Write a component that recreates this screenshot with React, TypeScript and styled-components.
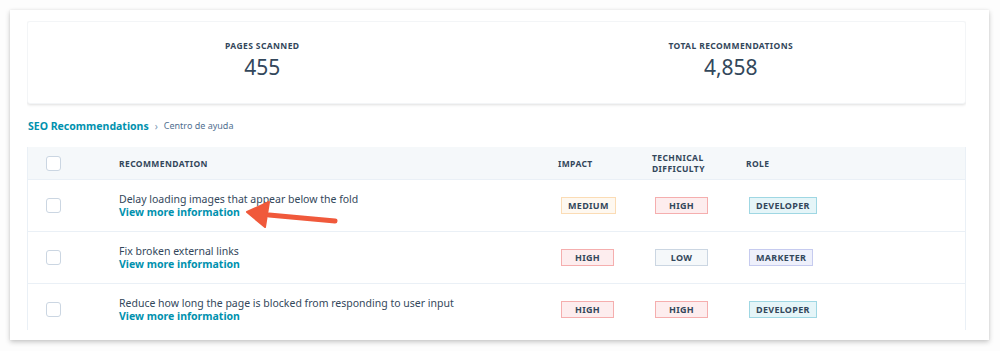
import React from 'react';
import styled, { createGlobalStyle } from 'styled-components';

const GlobalStyle = createGlobalStyle`
  html, body {
    margin: 0;
    padding: 0;
    background: #ffffff;
    font-family: "Noto Sans", "Open Sans", sans-serif;
    color: #33475b;
  }
`;

const Page = styled.div`
  width: 1000px;
  height: 351px;
  padding: 10px 11px 0 10px;
  box-sizing: border-box;
  background: #fdfdfd;
`;

const Panel = styled.div`
  height: 330px;
  background: #ffffff;
  box-shadow: 0 2px 5px rgba(0, 0, 0, 0.22), 0 0 2px rgba(0, 0, 0, 0.06);
  padding: 11px 23px 10px 17px;
  box-sizing: border-box;
`;

const Scroller = styled.div`
  height: 309px;
  overflow: hidden;
  position: relative;
`;

const StatsCard = styled.div`
  height: 83px;
  display: grid;
  grid-template-columns: 1fr 1fr;
  background: #ffffff;
  border-radius: 3px;
  box-shadow: 0 1px 3px rgba(0, 0, 0, 0.13);
  border: 1px solid #f3f5f7;
  box-sizing: border-box;
`;

const Stat = styled.div`
  display: flex;
  flex-direction: column;
  align-items: center;
  padding-top: 18px;
`;

const StatLabel = styled.div`
  font-size: 8.5px;
  font-weight: 700;
  letter-spacing: 0.4px;
  color: #33475b;
  line-height: 12px;
`;

const StatValue = styled.div`
  font-size: 21px;
  font-weight: 400;
  color: #33475b;
  line-height: 26px;
  margin-top: 2px;
`;

const Breadcrumb = styled.div`
  display: flex;
  align-items: center;
  height: 43px;
  gap: 6px;
  padding-left: 1px;
`;

const CrumbLink = styled.span`
  font-size: 10.5px;
  font-weight: 700;
  color: #0091ae;
`;

const CrumbSep = styled.span`
  font-size: 10px;
  color: #7c98b6;
`;

const CrumbCurrent = styled.span`
  font-size: 9px;
  color: #516f90;
`;

const Table = styled.div`
  border-left: 1px solid #eaf0f6;
  border-right: 1px solid #eaf0f6;
`;

const Row = styled.div<{ $header?: boolean }>`
  display: grid;
  grid-template-columns: 91px 439px 94px 94px 1fr;
  align-items: center;
  height: ${p => (p.$header ? '33px' : '52px')};
  background: ${p => (p.$header ? '#f5f8fa' : '#ffffff')};
  border-bottom: 1px solid #eaf0f6;
  box-sizing: border-box;
`;

const CheckCell = styled.div`
  display: flex;
  padding-left: 18px;
`;

const Checkbox = styled.span`
  width: 13px;
  height: 13px;
  border: 1px solid #cbd6e2;
  border-radius: 3px;
  background: #ffffff;
`;

const HeadCell = styled.div`
  font-size: 8.5px;
  font-weight: 700;
  letter-spacing: 0.4px;
  color: #33475b;
  line-height: 11px;
`;

const TextCell = styled.div`
  display: flex;
  flex-direction: column;
  line-height: 13px;
`;

const Title = styled.span`
  font-size: 10.5px;
  color: #33475b;
`;

const MoreLink = styled.span`
  font-size: 10.5px;
  font-weight: 700;
  color: #0091ae;
`;

const tagColors: Record<string, [string, string]> = {
  MEDIUM: ['#fef8f0', '#fbdcb5'],
  HIGH: ['#fdedee', '#f5aeae'],
  LOW: ['#f5f8fa', '#cbd6e2'],
  DEVELOPER: ['#e5f5f8', '#9fd7e3'],
  MARKETER: ['#eef0fb', '#c6cbef'],
};

const Tag = styled.span<{ $kind: string }>`
  display: inline-flex;
  justify-content: center;
  align-items: center;
  min-width: 53px;
  height: 17px;
  padding: 0 6px;
  box-sizing: border-box;
  font-size: 9px;
  font-weight: 700;
  letter-spacing: 0.3px;
  color: #33475b;
  background: ${p => tagColors[p.$kind][0]};
  border: 1px solid ${p => tagColors[p.$kind][1]};
  margin-left: 3px;
`;

const TagCell = styled.div`
  display: flex;
`;

const Arrow = styled.svg`
  position: absolute;
  left: 0;
  top: 0;
  pointer-events: none;
`;

const rows = [
  { title: 'Delay loading images that appear below the fold', impact: 'MEDIUM', diff: 'HIGH', role: 'DEVELOPER' },
  { title: 'Fix broken external links', impact: 'HIGH', diff: 'LOW', role: 'MARKETER' },
  { title: 'Reduce how long the page is blocked from responding to user input', impact: 'HIGH', diff: 'HIGH', role: 'DEVELOPER' },
];

export default function App() {
  return (
    <>
      <GlobalStyle />
      <Page>
        <Panel>
          <Scroller>
            <StatsCard>
              <Stat>
                <StatLabel>PAGES SCANNED</StatLabel>
                <StatValue>455</StatValue>
              </Stat>
              <Stat>
                <StatLabel>TOTAL RECOMMENDATIONS</StatLabel>
                <StatValue>4,858</StatValue>
              </Stat>
            </StatsCard>
            <Breadcrumb>
              <CrumbLink>SEO Recommendations</CrumbLink>
              <CrumbSep>›</CrumbSep>
              <CrumbCurrent>Centro de ayuda</CrumbCurrent>
            </Breadcrumb>
            <Table>
              <Row $header>
                <CheckCell><Checkbox /></CheckCell>
                <HeadCell>RECOMMENDATION</HeadCell>
                <HeadCell>IMPACT</HeadCell>
                <HeadCell>TECHNICAL<br />DIFFICULTY</HeadCell>
                <HeadCell>ROLE</HeadCell>
              </Row>
              {rows.map(r => (
                <Row key={r.title}>
                  <CheckCell><Checkbox /></CheckCell>
                  <TextCell>
                    <Title>{r.title}</Title>
                    <MoreLink>View more information</MoreLink>
                  </TextCell>
                  <TagCell><Tag $kind={r.impact}>{r.impact}</Tag></TagCell>
                  <TagCell><Tag $kind={r.diff}>{r.diff}</Tag></TagCell>
                  <TagCell><Tag $kind={r.role}>{r.role}</Tag></TagCell>
                </Row>
              ))}
            </Table>
            <Arrow width="400" height="260">
              <line x1="242" y1="194" x2="308" y2="200" stroke="#f0593b" strokeWidth="5" strokeLinecap="round" />
              <polygon points="220,191 242,181 238,206" fill="#f0593b" stroke="#f0593b" strokeWidth="2" strokeLinejoin="round" />
            </Arrow>
          </Scroller>
        </Panel>
      </Page>
    </>
  );
}
